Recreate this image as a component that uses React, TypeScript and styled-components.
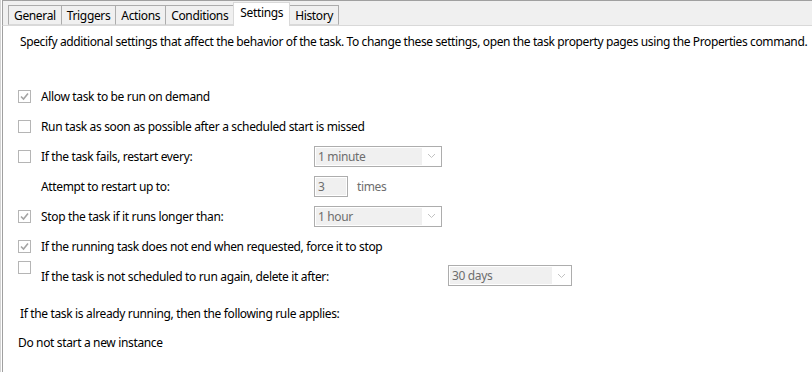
import React from 'react';
import styled, { createGlobalStyle } from 'styled-components';

const GlobalStyle = createGlobalStyle`
  html, body {
    margin: 0;
    padding: 0;
    background: #ffffff;
  }
  body {
    font-family: "Noto Sans", "Open Sans", sans-serif;
    font-size: 12px;
    letter-spacing: -0.35px;
    color: #000;
  }
`;

const tabs = ['General', 'Triggers', 'Actions', 'Conditions', 'Settings', 'History'];

function Check({ checked }: { checked?: boolean }) {
  return (
    <CheckBox>
      {checked && (
        <svg width='11' height='11' viewBox='0 0 11 11'>
          <path d='M2 5.5 L4.5 8 L9 2.5' fill='none' stroke='#a4a4a4' strokeWidth='1.6' />
        </svg>
      )}
    </CheckBox>
  );
}

function Dropdown({ value, width }: { value: string; width: number }) {
  return (
    <Select $width={width}>
      <span className='select__value'>{value}</span>
      <span className='select__arrow'>
        <svg width='9' height='6' viewBox='0 0 9 6'>
          <path d='M1 1 L4.5 4.5 L8 1' fill='none' stroke='#c2c2c2' strokeWidth='1' />
        </svg>
      </span>
    </Select>
  );
}

export default function App() {
  return (
    <>
      <GlobalStyle />
      <Window>
        <TabStrip>
          {tabs.map((t) => (
            <Tab key={t} $active={t === 'Settings'}>
              {t}
            </Tab>
          ))}
        </TabStrip>
        <Panel>
          <Description>
            Specify additional settings that affect the behavior of the task. To change these settings, open the
            task property pages using the Properties command.
          </Description>
          <Options>
            <Row>
              <Check checked />
              <Label>Allow task to be run on demand</Label>
            </Row>
            <Row>
              <Check />
              <Label>Run task as soon as possible after a scheduled start is missed</Label>
            </Row>
            <Row>
              <Check />
              <Label>If the task fails, restart every:</Label>
              <Dropdown value='1 minute' width={128} />
            </Row>
            <Row>
              <CheckSpacer />
              <Label>Attempt to restart up to:</Label>
              <NumberBox>3</NumberBox>
              <Hint>times</Hint>
            </Row>
            <Row>
              <Check checked />
              <Label>Stop the task if it runs longer than:</Label>
              <Dropdown value='1 hour' width={128} />
            </Row>
            <Row>
              <Check checked />
              <Label $wide>If the running task does not end when requested, force it to stop</Label>
            </Row>
            <DeleteRow>
              <Check />
              <Label $wide>If the task is not scheduled to run again, delete it after:</Label>
              <Dropdown value='30 days' width={124} />
            </DeleteRow>
          </Options>
          <RuleTitle>If the task is already running, then the following rule applies:</RuleTitle>
          <RuleValue>Do not start a new instance</RuleValue>
        </Panel>
      </Window>
    </>
  );
}

const Window = styled.div`
  width: 812px;
  height: 372px;
  box-sizing: border-box;
  border-left: 1px solid #d4d4d4;
  overflow: hidden;
  display: flex;
  flex-direction: column;
`;

const TabStrip = styled.div`
  height: 26px;
  box-sizing: border-box;
  display: flex;
  align-items: flex-end;
  padding-left: 5px;
  margin-left: 1px;
  background: #f0f0f0;
  border-top: 1px solid #a0a0a0;
  border-left: 1px solid #a0a0a0;
  border-bottom: 1px solid #d9d9d9;
`;

const Tab = styled.div<{ $active?: boolean }>`
  position: relative;
  height: ${({ $active }) => ($active ? 24 : 20)}px;
  margin-bottom: ${({ $active }) => ($active ? -1 : 0)}px;
  box-sizing: border-box;
  padding: ${({ $active }) => ($active ? '1px 6px 0' : '0 5px')};
  display: flex;
  align-items: ${({ $active }) => ($active ? 'flex-start' : 'center')};
  background: ${({ $active }) => ($active ? '#ffffff' : '#f0f0f0')};
  border: 1px solid ${({ $active }) => ($active ? '#d9d9d9' : '#acacac')};
  border-bottom: ${({ $active }) => ($active ? 'none' : '1px solid #d9d9d9')};
  margin-right: -1px;
  z-index: ${({ $active }) => ($active ? 1 : 0)};
  white-space: nowrap;
`;

const Panel = styled.div`
  flex: 1;
  margin-left: 1px;
  border-left: 1px solid #a0a0a0;
  background: #fff;
  padding-left: 15px;
  display: flex;
  flex-direction: column;
`;

const Description = styled.div`
  margin-top: 7px;
  padding-left: 2px;
  line-height: 17px;
  letter-spacing: -0.38px;
  white-space: nowrap;
`;

const Options = styled.div`
  margin-top: 31px;
  display: flex;
  flex-direction: column;
`;

const Row = styled.div`
  height: 30px;
  display: flex;
  align-items: center;
`;

const DeleteRow = styled.div`
  height: 26px;
  display: flex;
  align-items: flex-start;
  & > span:nth-child(2) {
    margin-top: 7px;
    line-height: 17px;
  }
  & > div:last-child {
    margin-top: 4px;
  }
`;

const CheckBox = styled.div`
  width: 13px;
  height: 13px;
  box-sizing: border-box;
  border: 1px solid #b5b5b5;
  background: #fff;
  display: flex;
  align-items: center;
  justify-content: center;
  margin-right: 10px;
  flex-shrink: 0;
`;

const CheckSpacer = styled.div`
  width: 23px;
  flex-shrink: 0;
`;

const Label = styled.span<{ $wide?: boolean }>`
  width: ${({ $wide }) => ($wide ? 407 : 273)}px;
  flex-shrink: 0;
  white-space: nowrap;
`;

const Select = styled.div<{ $width: number }>`
  width: ${({ $width }) => $width}px;
  height: 21px;
  box-sizing: border-box;
  border: 1px solid #adadad;
  padding: 1px;
  display: flex;
  color: #6d6d6d;
  .select__value {
    flex: 1;
    background: #f0f0f0;
    padding-left: 2px;
    display: flex;
    align-items: center;
  }
  .select__arrow {
    width: 18px;
    display: flex;
    align-items: center;
    justify-content: center;
  }
`;

const NumberBox = styled.div`
  width: 34px;
  height: 21px;
  box-sizing: border-box;
  border: 1px solid #adadad;
  padding: 1px 1px 1px 3px;
  color: #6d6d6d;
  display: flex;
  align-items: center;
  background: linear-gradient(#f0f0f0, #f0f0f0);
  background-size: calc(100% - 2px) calc(100% - 2px);
  background-position: 1px 1px;
  background-repeat: no-repeat;
`;

const Hint = styled.span`
  margin-left: 9px;
  color: #6d6d6d;
`;

const RuleTitle = styled.div`
  margin-top: 18px;
  padding-left: 2px;
  line-height: 17px;
`;

const RuleValue = styled.div`
  margin-top: 12px;
  line-height: 17px;
`;
